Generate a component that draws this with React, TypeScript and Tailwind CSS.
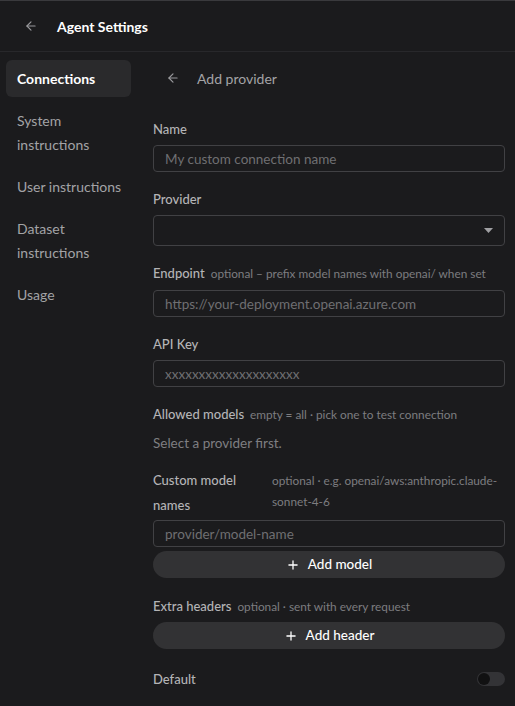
import { ArrowLeft, Plus } from "lucide-react";

const navItems = [
  { label: "Connections", active: true },
  { label: "System instructions" },
  { label: "User instructions" },
  { label: "Dataset instructions" },
  { label: "Usage" },
];

const Label = ({ children, hint }: { children: React.ReactNode; hint?: string }) => (
  <div className="flex items-baseline gap-1.5 leading-4">
    <span className="text-[13px] font-medium text-[#b4b4b6]">{children}</span>
    {hint && <span className="text-[11.8px] text-[#7d7d80]">{hint}</span>}
  </div>
);

const TextInput = ({ placeholder }: { placeholder: string }) => (
  <input
    placeholder={placeholder}
    className="h-[27px] w-full rounded-[4px] border border-[#414144] bg-transparent px-[11px] text-[13.5px] text-white outline-none placeholder:text-[#6f6f72]"
  />
);

const PillButton = ({ label }: { label: string }) => (
  <button className="flex h-[27px] w-full items-center justify-center gap-2 rounded-full bg-[#323234] text-[13.5px] font-medium text-white">
    <Plus className="h-3.5 w-3.5" strokeWidth={2.2} />
    {label}
  </button>
);

export default function App() {
  return (
    <div
      className="flex h-[706px] w-[515px] flex-col overflow-hidden border-t border-[#3a3a3d] bg-[#1b1b1d] text-white"
      style={{ fontFamily: 'Lato, "Noto Sans", sans-serif' }}
    >
      <header className="flex h-[51px] shrink-0 items-center gap-[19px] border-b border-[#28282b] px-[24px]">
        <ArrowLeft className="h-3.5 w-3.5 text-[#9a9a9d]" strokeWidth={2} />
        <span className="text-[14px] font-bold">Agent Settings</span>
      </header>

      <div className="flex min-h-0 flex-1">
        <nav className="flex w-[131px] shrink-0 flex-col gap-[5px] pl-[6px] pt-[8px]">
          {navItems.map((item) => (
            <div
              key={item.label}
              className={
                item.active
                  ? "rounded-[6px] bg-[#2a2a2c] py-[6.5px] pl-[11px] pr-[6px] text-[14px] font-bold leading-6 text-white"
                  : "rounded-[6px] py-[6.5px] pl-[11px] pr-[6px] text-[14px] leading-6 text-[#a3a3a6]"
              }
            >
              {item.label}
            </div>
          ))}
        </nav>

        <main className="flex min-w-0 flex-1 flex-col pl-[22px] pr-[10px]">
          <div className="flex h-[52px] items-center gap-[17px] pl-[13px]">
            <ArrowLeft className="h-3.5 w-3.5 text-[#9a9a9d]" strokeWidth={2} />
            <span className="text-[14px] text-[#a3a3a6]">Add provider</span>
          </div>

          <div className="mt-[17px] flex flex-col">
            <Label>Name</Label>
            <div className="mt-[8px]">
              <TextInput placeholder="My custom connection name" />
            </div>

            <div className="mt-[19px]">
              <Label>Provider</Label>
            </div>
            <div className="mt-[8px] flex h-[31px] items-center justify-end rounded-[4px] border border-[#414144] pr-[11px]">
              <svg width="9" height="5" viewBox="0 0 9 5" className="text-[#a0a0a3]">
                <path d="M0 0h9L4.5 5z" fill="currentColor" />
              </svg>
            </div>

            <div className="mt-[19px]">
              <Label hint="optional – prefix model names with openai/ when set">Endpoint</Label>
            </div>
            <div className="mt-[8px]">
              <TextInput placeholder="https://your-deployment.openai.azure.com" />
            </div>

            <div className="mt-[19px]">
              <Label>API Key</Label>
            </div>
            <div className="mt-[8px]">
              <TextInput placeholder="xxxxxxxxxxxxxxxxxxxx" />
            </div>

            <div className="mt-[19px]">
              <Label hint="empty = all · pick one to test connection">Allowed models</Label>
            </div>
            <p className="mt-[12px] text-[13.5px] leading-4 text-[#7f7f82]">Select a provider first.</p>

            <div className="mt-[17px] flex items-start gap-[8px]">
              <span className="w-[111px] shrink-0 text-[13px] font-medium leading-[25px] text-[#b4b4b6]">
                Custom model names
              </span>
              <span className="pt-[2px] text-[11.8px] leading-[21px] text-[#7d7d80]">
                optional · e.g. openai/aws:anthropic.claude-sonnet-4-6
              </span>
            </div>
            <div className="mt-[2px]">
              <TextInput placeholder="provider/model-name" />
            </div>
            <div className="mt-[4px]">
              <PillButton label="Add model" />
            </div>

            <div className="mt-[20px]">
              <Label hint="optional · sent with every request">Extra headers</Label>
            </div>
            <div className="mt-[7px]">
              <PillButton label="Add header" />
            </div>

            <div className="mt-[22px] flex items-center justify-between">
              <span className="text-[13px] font-medium leading-4 text-[#b4b4b6]">Default</span>
              <div className="flex h-[14px] w-[28px] items-center rounded-full bg-[#333336] px-[1px]">
                <div className="h-[12px] w-[12px] rounded-full bg-[#111112]" />
              </div>
            </div>
          </div>
        </main>
      </div>
    </div>
  );
}
